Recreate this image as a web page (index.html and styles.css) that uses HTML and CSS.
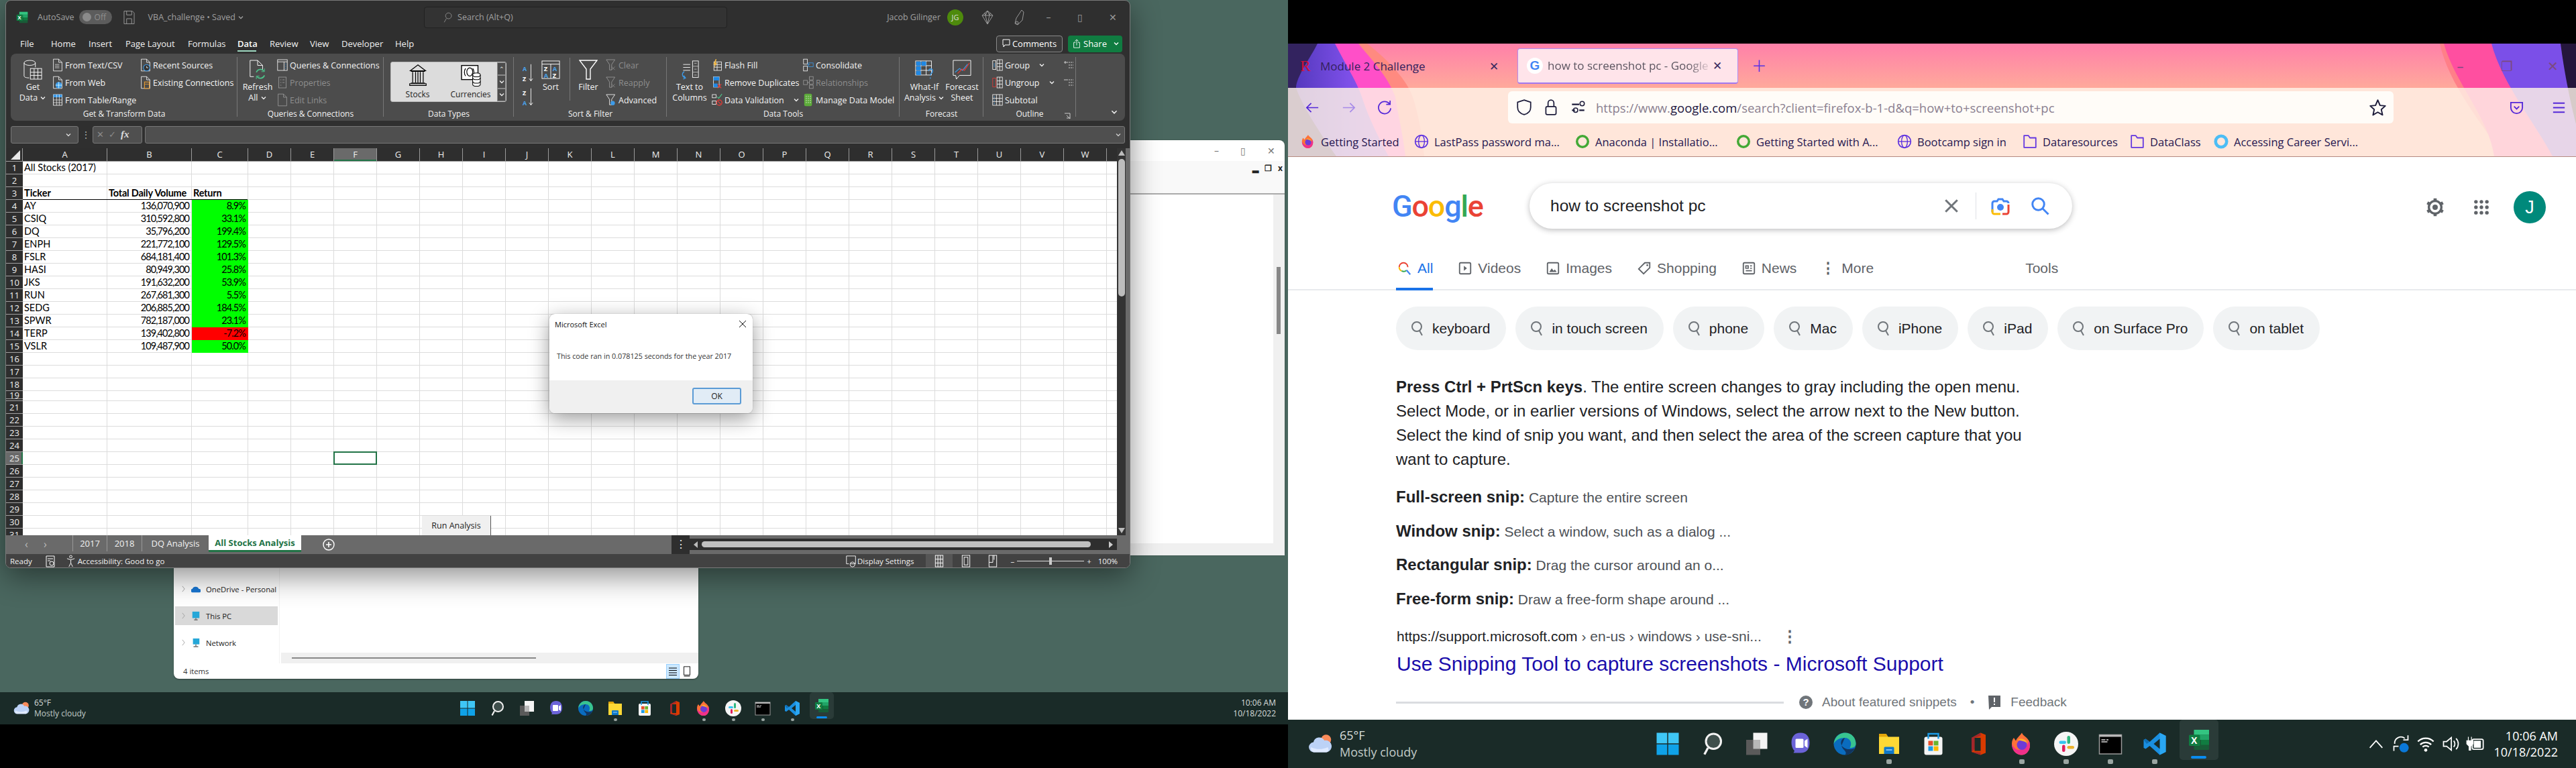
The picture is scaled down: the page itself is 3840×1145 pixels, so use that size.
FILE: index.html
```html
<!DOCTYPE html>
<html lang="en">
<head>
<meta charset="utf-8">
<title>Excel and Firefox on two monitors</title>
<link rel="stylesheet" href="styles.css">
</head>
<body>
<svg class="sprite" width="0" height="0" aria-hidden="true">
<defs>
<linearGradient id="artv" x1="0" x2="1" y1="0" y2="0"><stop offset="0" stop-color="#4f36b8"/><stop offset=".6" stop-color="#7d4fe8"/><stop offset="1" stop-color="#9a52e8"/></linearGradient>
<symbol id="chev" viewBox="0 0 10 10"><path d="M2 3.5l3 3 3-3" fill="none" stroke="currentColor" stroke-width="1.3"/></symbol>
<symbol id="doc" viewBox="0 0 20 24"><path d="M2 1h10l6 6v16H2zM12 1v6h6" fill="none" stroke="#fff"/></symbol>
<symbol id="fromtext" viewBox="0 0 20 24"><path d="M2 1h10l6 6v16H2zM12 1v6h6" fill="none" stroke="#fff"/><path d="M5 11h8M5 14h8M5 17h8" stroke="#ddd"/></symbol>
<symbol id="fromweb" viewBox="0 0 20 24"><path d="M2 1h10l6 6v16H2zM12 1v6h6" fill="none" stroke="#fff"/><circle cx="12" cy="17" r="6" fill="#3d9be9"/><path d="M6 17h12M12 11v12" stroke="#dff"/></symbol>
<symbol id="fromtable" viewBox="0 0 20 24"><rect x="2" y="2" width="16" height="20" fill="none" stroke="#fff"/><rect x="2" y="2" width="16" height="5" fill="#3d9be9"/><path d="M2 12h16M2 17h16M8 2v20M13 2v20" stroke="#fff" stroke-width=".8"/></symbol>
<symbol id="recent" viewBox="0 0 20 24"><path d="M2 1h10l6 6v16H2zM12 1v6h6" fill="none" stroke="#fff"/><circle cx="12" cy="17" r="6" fill="#333" stroke="#3d9be9" stroke-width="1.4"/><path d="M12 14v3h3" stroke="#fff" fill="none"/></symbol>
<symbol id="existing" viewBox="0 0 20 24"><path d="M2 1h10l6 6v16H2zM12 1v6h6" fill="none" stroke="#fff"/><rect x="8" y="11" width="9" height="12" fill="#4c4c4c" stroke="#f0a030" stroke-width="1.3"/><path d="M8 15h9" stroke="#f0a030"/></symbol>
<symbol id="getdata" viewBox="0 0 30 32"><path d="M1 5v21c0 2 4 3 8 3M19 5v7" fill="none" stroke="#fff"/><ellipse cx="10" cy="5" rx="9" ry="4" fill="none" stroke="#fff"/><rect x="11" y="14" width="18" height="17" fill="#4c4c4c" stroke="#fff"/><path d="M11 20h18M11 25h18M17 14v17M23 14v17" stroke="#fff"/></symbol>
<symbol id="refresh" viewBox="0 0 30 32"><path d="M3 1h12l8 8v7M15 1v8h8M3 1v26h6" fill="none" stroke="#fff"/><path d="M13 20a7 7 0 0 1 12-2M26 25a7 7 0 0 1-12 2" fill="none" stroke="#4cc38a" stroke-width="1.8"/><path d="M26 14v5h-5M13 31v-5h5" fill="none" stroke="#4cc38a"/></symbol>
<symbol id="queries" viewBox="0 0 20 24"><rect x="1" y="2" width="18" height="20" fill="none" stroke="#fff"/><path d="M1 6h18M13 6v16" stroke="#fff"/><path d="M15 10h2M15 14h2M15 18h2" stroke="#3d9be9"/></symbol>
<symbol id="props" viewBox="0 0 20 24"><rect x="3" y="2" width="14" height="20" fill="none" stroke="#fff"/><path d="M6 7h2M6 12h2M6 17h2M10 7h4M10 12h4" stroke="#fff"/></symbol>
<symbol id="bank" viewBox="0 0 30 40"><path d="M15 2L28 12H2zM1 34h28v3H1z" fill="none" stroke="#000" stroke-width="1.4"/><path d="M6 14v18M11 14v18M15 14v18M19 14v18M24 14v18M3 13h24M3 33h24" stroke="#000" stroke-width="1.4"/></symbol>
<symbol id="money" viewBox="0 0 34 40"><rect x="1" y="3" width="28" height="24" fill="#fff" stroke="#000" stroke-width="1.6"/><path d="M8 8a7 9 0 0 0 0 13M20 8a7 9 0 0 1 0 13" fill="none" stroke="#000" stroke-width="1.4"/><ellipse cx="15" cy="14" rx="5" ry="7" fill="none" stroke="#000" stroke-width="1.3"/><g fill="#fff" stroke="#000" stroke-width="1.2"><path d="M20 19a6 3 0 0 1 13 0v16a6 3 0 0 1-13 0z"/><path d="M20 19a6 3 0 0 0 13 0M20 24a6 3 0 0 0 13 0M20 30a6 3 0 0 0 13 0" fill="none"/></g></symbol>
<symbol id="az" viewBox="0 0 20 36"><text x="1" y="14" class="svgt blue">A</text><text x="1" y="30" class="svgt">Z</text><path d="M15 2v28M12 26l3 4 3-4" fill="none" stroke="#fff"/></symbol>
<symbol id="za" viewBox="0 0 20 36"><text x="1" y="14" class="svgt">Z</text><text x="1" y="30" class="svgt blue">A</text><path d="M15 2v28M12 26l3 4 3-4" fill="none" stroke="#fff"/></symbol>
<symbol id="sortb" viewBox="0 0 30 30"><rect x="1" y="1" width="28" height="28" fill="none" stroke="#fff"/><path d="M1 6h28M15 6v23" stroke="#fff"/><text x="4" y="17" class="svgt">Z</text><text x="4" y="28" class="svgt blue">A</text><text x="18" y="17" class="svgt blue">A</text><text x="18" y="28" class="svgt">Z</text></symbol>
<symbol id="funnel" viewBox="0 0 28 30"><path d="M1 1h26L17 14v15h-6V14z" fill="none" stroke="#fff" stroke-width="1.4"/></symbol>
<symbol id="fsmall" viewBox="0 0 20 24"><path d="M1 2h16L11 11v10H7V11z" fill="none" stroke="#fff"/><path d="M11 15l6 6M17 15l-6 6" stroke="#ddd"/></symbol>
<symbol id="fadv" viewBox="0 0 20 24"><path d="M1 2h16L11 11v10H7V11z" fill="none" stroke="#fff"/><circle cx="13" cy="18" r="4" fill="#3d9be9"/></symbol>
<symbol id="t2c" viewBox="0 0 32 32"><rect x="21" y="1" width="10" height="28" fill="none" stroke="#fff"/><path d="M21 10h10M21 20h10M24 5h4M24 15h4M24 25h4" stroke="#bbb"/><path d="M5 7h12M5 12h12M5 17h12" stroke="#fff"/><path d="M7 19c-5 3-4 9 2 11M6 26l3 4-4 2" fill="none" stroke="#3d9be9" stroke-width="1.5"/></symbol>
<symbol id="flash" viewBox="0 0 20 24"><rect x="4" y="6" width="14" height="16" fill="none" stroke="#fff"/><path d="M4 11h14M4 16h14M10 6v16" stroke="#fff"/><path d="M7 1L3 11h3l-2 7 6-10H7l2-7z" fill="#f4b942"/></symbol>
<symbol id="dupes" viewBox="0 0 20 26"><rect x="3" y="2" width="11" height="20" fill="none" stroke="#fff"/><rect x="3" y="2" width="11" height="7" fill="#1e88e5"/><rect x="3" y="15" width="8" height="7" fill="#1e88e5"/><path d="M11 16l7 8M18 16l-7 8" stroke="#e53935" stroke-width="1.6"/></symbol>
<symbol id="valid" viewBox="0 0 20 24"><rect x="1" y="2" width="7" height="6" fill="none" stroke="#fff"/><rect x="1" y="14" width="7" height="6" fill="none" stroke="#fff"/><path d="M10 6l3 3 6-8" fill="none" stroke="#4cc38a" stroke-width="1.4"/><circle cx="14" cy="17" r="5" fill="none" stroke="#e53935" stroke-width="1.6"/><path d="M11 14l6 6" stroke="#e53935" stroke-width="1.5"/></symbol>
<symbol id="consol" viewBox="0 0 20 24"><rect x="1" y="1" width="7" height="9" fill="none" stroke="#fff"/><rect x="1" y="14" width="7" height="9" fill="none" stroke="#fff"/><rect x="10" y="8" width="9" height="7" fill="none" stroke="#3d9be9"/><path d="M8 11h5" stroke="#3d9be9"/></symbol>
<symbol id="rel" viewBox="0 0 20 24"><rect x="1" y="8" width="7" height="8" fill="none" stroke="#fff"/><rect x="12" y="1" width="7" height="6" fill="none" stroke="#fff"/><rect x="12" y="9" width="7" height="6" fill="none" stroke="#fff"/><rect x="12" y="17" width="7" height="6" fill="none" stroke="#fff"/><path d="M8 12h4" stroke="#fff"/></symbol>
<symbol id="model" viewBox="0 0 20 26"><rect x="2" y="1" width="15" height="24" rx="3" fill="#5dab3a"/><path d="M6 5v16M10 5v16M14 5v16" stroke="#fff" stroke-dasharray="2 2"/></symbol>
<symbol id="whatif" viewBox="0 0 32 32"><rect x="1" y="1" width="27" height="24" fill="none" stroke="#fff"/><path d="M1 9h27M1 17h27M10 1v24M19 1v24" stroke="#fff"/><rect x="2" y="2" width="8" height="7" fill="#1e88e5"/><rect x="2" y="10" width="8" height="7" fill="#1e88e5"/><rect x="2" y="18" width="8" height="7" fill="#1e88e5"/><rect x="11" y="2" width="8" height="7" fill="#1e88e5"/><path d="M23 18c1-5 7-4 7 0s-4 4-4 8M26 29v2" fill="none" stroke="#3d9be9" stroke-width="1.6"/></symbol>
<symbol id="fcast" viewBox="0 0 30 32"><path d="M1 1h28v24H11l-5 6-1-6H1z" fill="none" stroke="#fff"/><path d="M4 20l7-6 5 3 8-10" fill="none" stroke="#3d9be9" stroke-width="1.3"/><path d="M8 22l7-7 4 2 8-12" fill="none" stroke="#e53935" stroke-width="1.3"/></symbol>
<symbol id="grp" viewBox="0 0 20 24"><rect x="9" y="2" width="10" height="20" fill="none" stroke="#fff"/><path d="M9 9h10M9 15h10M14 2v20" stroke="#fff"/><rect x="1" y="4" width="6" height="16" fill="none" stroke="#fff"/><path d="M4 8v8" stroke="#3d9be9"/></symbol>
<symbol id="ungrp" viewBox="0 0 20 24"><rect x="9" y="2" width="10" height="20" fill="none" stroke="#fff"/><path d="M9 9h10M9 15h10M14 2v20" stroke="#fff"/><rect x="1" y="4" width="6" height="16" fill="none" stroke="#e53935"/></symbol>
<symbol id="subt" viewBox="0 0 20 24"><rect x="1" y="2" width="18" height="20" fill="none" stroke="#fff"/><path d="M1 9h18M1 15h18M8 2v20M14 2v20" stroke="#fff"/><path d="M4 5v3M4 11v3M4 17v3" stroke="#3d9be9"/></symbol>
<symbol id="oplus" viewBox="0 0 16 16"><path d="M5 4h10M8 8h7M8 12h7" stroke="#ccc" stroke-dasharray="2 1"/><path d="M1 4h4M3 2v4" stroke="#ccc"/></symbol>
<symbol id="ominus" viewBox="0 0 16 16"><path d="M5 4h10M8 8h7M8 12h7" stroke="#ccc" stroke-dasharray="2 1"/><path d="M1 4h4" stroke="#ccc"/></symbol>
<symbol id="xl" viewBox="0 0 24 24"><rect x="7" y="2" width="15" height="20" rx="1" fill="#185c37"/><rect x="7" y="2" width="15" height="5" fill="#33c481"/><rect x="14" y="7" width="8" height="5" fill="#21a366"/><rect x="7" y="7" width="7" height="5" fill="#21a366"/><rect x="14" y="12" width="8" height="5" fill="#107c41"/><rect x="2" y="7" width="11" height="11" rx="1" fill="#107c41"/><text x="4.2" y="16" class="svgx">X</text></symbol>
<symbol id="start" viewBox="0 0 24 24"><rect x="1" y="1" width="10.5" height="10.5" fill="#3fc6f5"/><rect x="12.5" y="1" width="10.5" height="10.5" fill="#3fc6f5"/><rect x="1" y="12.5" width="10.5" height="10.5" fill="#0fa2e8"/><rect x="12.5" y="12.5" width="10.5" height="10.5" fill="#0fa2e8"/></symbol>
<symbol id="tsearch" viewBox="0 0 24 24"><circle cx="13.5" cy="9.5" r="7.5" fill="#3f4f4c" stroke="#f2f2f2" stroke-width="2"/><path d="M8 16l-3.5 6.5" stroke="#f2f2f2" stroke-width="2.2"/></symbol>
<symbol id="tview" viewBox="0 0 24 24"><rect x="9" y="1" width="14" height="16" fill="#f5f5f5"/><rect x="2" y="8" width="14" height="15" fill="#5a5a5a"/><rect x="9" y="8" width="7" height="9" fill="#b8b8b8"/></symbol>
<symbol id="chat" viewBox="0 0 24 24"><path d="M12 1c6 0 9 4 9 10s-3 10-9 10H5l1-2C4 17 3 14 3 11 3 5 6 1 12 1z" fill="#6b63d8"/><rect x="7" y="7" width="8" height="9" rx="1" fill="#fff"/><path d="M16 9l3-2v9l-3-2z" fill="#fff"/></symbol>
<symbol id="edge" viewBox="0 0 24 24"><circle cx="12" cy="12" r="11" fill="#0a6cbf"/><path d="M1 12C2 4 8 1 12 1c7 0 11 5 11 11 0 3-3 4-6 4 3-5 0-10-5-10C7 6 3 8 1 12z" fill="#38c48f"/><path d="M12 6C8 7 7 12 10 15s9 3 12 1c-2 5-6 7-10 7 4-3-4-6-3-10z" fill="#12355f"/></symbol>
<symbol id="folder" viewBox="0 0 24 24"><path d="M2 2h7l2 3h11v17H2z" fill="#fdd835"/><path d="M2 2h7l2 3H2z" fill="#e2a50a"/><path d="M8 15h8a1 1 0 0 1 1 1v6H7v-6a1 1 0 0 1 1-1z" fill="#0f78c9"/><path d="M9 18h6" stroke="#9fd4ff"/></symbol>
<symbol id="store" viewBox="0 0 24 24"><rect x="3" y="5" width="18" height="18" rx="2" fill="#f4f4f4"/><path d="M7 7V2h10v5" fill="none" stroke="#1c9be6" stroke-width="1.6"/><rect x="7" y="9" width="4.6" height="4.6" fill="#e8502a"/><rect x="12.4" y="9" width="4.6" height="4.6" fill="#6ab42e"/><rect x="7" y="14.4" width="4.6" height="4.6" fill="#1c9be6"/><rect x="12.4" y="14.4" width="4.6" height="4.6" fill="#fbb900"/></symbol>
<symbol id="office" viewBox="0 0 24 24"><path d="M15 1l5 2v18l-5 2-9-3V6z" fill="#d83b01"/><path d="M15 1v22l-9-3 9 .5V4L9 6v11l-3 3V6z" fill="#a4262c"/><rect x="9" y="6" width="6" height="13" fill="#1a2b28"/></symbol>
<symbol id="ffox" viewBox="0 0 24 24"><path d="M12 1c1 3 5 4 7 8 3 6-1 14-7 14S2 18 2 12c0-3 1-5 2-6l2 3c1-3 4-5 6-8z" fill="#ff7139"/><path d="M19 9c3 6-1 14-7 14S2 18 2 12c3 8 13 9 17-3z" fill="#f0308a"/><circle cx="12" cy="13" r="5" fill="#6d3bd6"/><path d="M8 8c3-2 8-1 9 3-3-2-6-2-9-3z" fill="#ffb02e"/></symbol>
<symbol id="slack" viewBox="0 0 24 24"><circle cx="12" cy="12" r="12" fill="#f5f5f5"/><rect x="13" y="4" width="3" height="8" rx="1.5" fill="#2eb67d"/><rect x="5" y="9" width="7" height="3" rx="1.5" fill="#36c5f0"/><rect x="8" y="13" width="3" height="7" rx="1.5" fill="#e01e5a"/><rect x="13" y="14" width="7" height="3" rx="1.5" fill="#ecb22e"/></symbol>
<symbol id="term" viewBox="0 0 24 24"><rect x="1" y="3" width="22" height="19" fill="#000" stroke="#9a9a9a"/><rect x="1" y="3" width="22" height="2" fill="#bbb"/><path d="M3 8h4M8 8h2M3 10h6" stroke="#ddd"/></symbol>
<symbol id="code" viewBox="0 0 24 24"><path d="M17 1l6 3v16l-6 3L7 14l-4 3-2-1V8l2-1 4 3z" fill="#1a8fe0"/><path d="M1 8l2-1 4 3-3 2z" fill="#0f6eb5"/><path d="M17 1l6 3v16l-6 3z" fill="#2aa6f2"/><path d="M17 7v10l-6-5z" fill="#1a2b28"/></symbol>
<symbol id="cloud" viewBox="0 0 28 24"><circle cx="21" cy="7" r="6" fill="#f98b5a"/><path d="M7 22a6 6 0 0 1-1-12 7 7 0 0 1 13-2 6 6 0 0 1 3 14z" fill="#bcd2f6"/><path d="M6 22a5 5 0 0 1-3-6c6 3 14 3 20 0 2 3 1 6-2 6z" fill="#dfeaff"/></symbol>
<symbol id="qsmall" viewBox="0 0 20 24"><circle cx="9" cy="9" r="7" fill="none" stroke="currentColor" stroke-width="2"/><path d="M13 15l4 7" stroke="currentColor" stroke-width="2"/></symbol>
<symbol id="globe" viewBox="0 0 20 20"><circle cx="10" cy="10" r="8.5" fill="none" stroke="#5a2ee0" stroke-width="1.5"/><ellipse cx="10" cy="10" rx="4" ry="8.5" fill="none" stroke="#5a2ee0" stroke-width="1.2"/><path d="M2 10h16" stroke="#5a2ee0" stroke-width="1.2"/></symbol>
<symbol id="ring" viewBox="0 0 20 20"><circle cx="10" cy="10" r="7.5" fill="none" stroke="#43a936" stroke-width="3.2"/></symbol>
<symbol id="ringb" viewBox="0 0 20 20"><circle cx="10" cy="10" r="7.5" fill="none" stroke="#4cbdf5" stroke-width="4.2"/></symbol>
<symbol id="bfolder" viewBox="0 0 20 20"><path d="M2 2h6l2 3h8v13H2z" fill="none" stroke="#6236e0" stroke-width="1.6" stroke-linejoin="round"/></symbol>
</defs>
</svg>

<div class="screens">
<section class="monitor left">
  <div class="desk">
    <div class="win back">
      <div class="back-title"><span class="wc">–</span><span class="wc">▯</span><span class="wc">✕</span></div>
      <div class="back-sub"><b>▂</b><b>❐</b><b>x</b></div>
      <div class="back-body"><div class="back-pane"></div><div class="back-scroll"><i></i></div></div>
      <div class="back-foot"></div>
    </div>

    <div class="win fe">
      <div class="fe-main">
        <nav class="fe-nav">
          <div class="fe-item"><svg class="ar" viewBox="0 0 8 12"><path d="M2 1l4 5-4 5" fill="none" stroke="#999"/></svg><svg class="ic14" viewBox="0 0 16 16"><path d="M3 14a3 3 0 0 1-1-6 6 6 0 0 1 11 0 3 3 0 0 1 1 6z" fill="#1976d2"/></svg>OneDrive - Personal</div>
          <div class="fe-item sel"><svg class="ar" viewBox="0 0 8 12"><path d="M2 1l4 5-4 5" fill="none" stroke="#999"/></svg><svg class="ic14" viewBox="0 0 16 16"><rect x="2" y="1" width="12" height="11" fill="#25a7d8"/><path d="M8 12v2M5 15h6" stroke="#555" stroke-width="1.4"/></svg>This PC</div>
          <div class="fe-item"><svg class="ar" viewBox="0 0 8 12"><path d="M2 1l4 5-4 5" fill="none" stroke="#999"/></svg><svg class="ic14" viewBox="0 0 16 16"><rect x="3" y="1" width="11" height="10" fill="#25a7d8"/><path d="M8 11v3M4 15h8" stroke="#555" stroke-width="1.4"/></svg>Network</div>
        </nav>
        <div class="fe-pane"><div class="fe-hs"><i></i></div></div>
      </div>
      <div class="fe-status"><span>4 items</span><span class="fe-views"><b class="on"><svg viewBox="0 0 12 14"><path d="M0 2h12M0 5.500h12M0 9h12M0 12.500h12" stroke="#000"/></svg></b><b><svg viewBox="0 0 12 18"><rect x="1" y="1" width="10" height="14" fill="none" stroke="#000"/><path d="M1 17h10" stroke="#000"/></svg></b></span></div>
    </div>

    <div class="win xl">
      <header class="xl-title">
        <svg class="xl-logo"><use href="#xl"/></svg>
        <span class="dim t-auto">AutoSave</span>
        <span class="toggle"><i></i>Off</span>
        <svg class="xl-save" viewBox="0 0 18 22"><path d="M1 1h13l3 3v17H1zM5 1v6h8V1M5 21v-8h8v8" fill="none" stroke="#9a9a9a"/></svg>
        <span class="dim t-file">VBA_challenge • Saved <svg class="ch"><use href="#chev"/></svg></span>
        <div class="xl-search"><svg class="ic14" viewBox="0 0 16 20"><circle cx="10" cy="7" r="5.5" fill="none" stroke="#9a9a9a"/><path d="M6 12l-4 7" stroke="#9a9a9a"/></svg><span>Search (Alt+Q)</span></div>
        <span class="dim t-user">Jacob Gilinger</span>
        <span class="avatar">JG</span>
        <svg class="xl-gem" viewBox="0 0 18 22"><path d="M9 1l8 7-8 13L1 8zM1 8h16M6 8l3 13 3-13M5 4l1 4 3-7 3 7 1-4" fill="none" stroke="#999"/></svg>
        <svg class="xl-pen" viewBox="0 0 18 26"><path d="M13 2l3 3-2 12-7 7-4-2 2-8z" fill="none" stroke="#999"/><circle cx="6" cy="21" r="2" fill="none" stroke="#999"/></svg>
        <div class="xl-ctrl"><span>–</span><span>▯</span><span>✕</span></div>
      </header>
      <div class="xl-tabs">
        <span class="tab t1">File</span><span class="tab t2">Home</span><span class="tab t3">Insert</span><span class="tab t4">Page Layout</span><span class="tab t5">Formulas</span><span class="tab t6 active">Data</span><span class="tab t7">Review</span><span class="tab t8">View</span><span class="tab t9">Developer</span><span class="tab t10">Help</span>
        <span class="btn-comments"><svg class="ic12" viewBox="0 0 12 14"><path d="M1 1h10v8H4l-2 3V9H1z" fill="none" stroke="#fff"/></svg>Comments</span>
        <span class="btn-share"><svg class="ic12" viewBox="0 0 12 16"><path d="M1 6h3M8 6h3v9H1V6M6 11V2M3 4l3-3 3 3" fill="none" stroke="#fff"/></svg>Share<svg class="ch chs"><use href="#chev"/></svg></span>
      </div>

      <div class="ribbon">
        <div class="rg g1">
          <div class="rb">
            <div class="big b-get"><svg class="bi"><use href="#getdata"/></svg><span>Get</span><span>Data <svg class="ch"><use href="#chev"/></svg></span></div>
            <div class="col c-get1"><div class="ri"><svg><use href="#fromtext"/></svg>From Text/CSV</div><div class="ri"><svg><use href="#fromweb"/></svg>From Web</div><div class="ri"><svg><use href="#fromtable"/></svg>From Table/Range</div></div>
            <div class="col"><div class="ri"><svg><use href="#recent"/></svg>Recent Sources</div><div class="ri"><svg><use href="#existing"/></svg>Existing Connections</div></div>
          </div>
          <div class="rl">Get &amp; Transform Data</div>
        </div>
        <div class="rg g2">
          <div class="rb">
            <div class="big b-ref"><svg class="bi"><use href="#refresh"/></svg><span>Refresh</span><span>All <svg class="ch"><use href="#chev"/></svg></span></div>
            <div class="col c-q"><div class="ri"><svg><use href="#queries"/></svg>Queries &amp; Connections</div><div class="ri off"><svg><use href="#props"/></svg>Properties</div><div class="ri off"><svg><use href="#doc"/></svg>Edit Links</div></div>
          </div>
          <div class="rl">Queries &amp; Connections</div>
        </div>
        <div class="rg g3">
          <div class="rb">
            <div class="gallery">
              <div class="gal-i"><svg class="gi"><use href="#bank"/></svg>Stocks</div>
              <div class="gal-i"><svg class="gi gi2"><use href="#money"/></svg>Currencies</div>
              <div class="gal-s"><b>⌃</b><b class="d"><svg class="ch"><use href="#chev"/></svg></b><b class="d"><svg class="ch"><use href="#chev"/></svg></b></div>
            </div>
          </div>
          <div class="rl">Data Types</div>
        </div>
        <div class="rg g4">
          <div class="rb">
            <div class="azs"><svg><use href="#az"/></svg><svg><use href="#za"/></svg></div>
            <div class="big b-sort"><svg class="bi"><use href="#sortb"/></svg><span>Sort</span></div>
            <div class="big b-filter"><svg class="bi"><use href="#funnel"/></svg><span>Filter</span></div>
            <div class="col c-f"><div class="ri off"><svg><use href="#fsmall"/></svg>Clear</div><div class="ri off"><svg><use href="#fsmall"/></svg>Reapply</div><div class="ri"><svg><use href="#fadv"/></svg>Advanced</div></div>
          </div>
          <div class="rl">Sort &amp; Filter</div>
        </div>
        <div class="rg g5">
          <div class="rb">
            <div class="big b-t2c"><svg class="bi"><use href="#t2c"/></svg><span>Text to</span><span>Columns</span></div>
            <div class="col c-d1"><div class="ri"><svg><use href="#flash"/></svg>Flash Fill</div><div class="ri"><svg><use href="#dupes"/></svg>Remove Duplicates</div><div class="ri"><svg><use href="#valid"/></svg>Data Validation <svg class="ch chg"><use href="#chev"/></svg></div></div>
            <div class="col"><div class="ri"><svg><use href="#consol"/></svg>Consolidate</div><div class="ri off"><svg><use href="#rel"/></svg>Relationships</div><div class="ri"><svg><use href="#model"/></svg>Manage Data Model</div></div>
          </div>
          <div class="rl">Data Tools</div>
        </div>
        <div class="rg g6">
          <div class="rb">
            <div class="big b-wi"><svg class="bi"><use href="#whatif"/></svg><span>What-If</span><span>Analysis <svg class="ch"><use href="#chev"/></svg></span></div>
            <div class="big b-fc"><svg class="bi"><use href="#fcast"/></svg><span>Forecast</span><span>Sheet</span></div>
          </div>
          <div class="rl">Forecast</div>
        </div>
        <div class="rg g7">
          <div class="rb">
            <div class="col c-o"><div class="ri"><svg><use href="#grp"/></svg>Group <svg class="ch chg"><use href="#chev"/></svg></div><div class="ri"><svg><use href="#ungrp"/></svg>Ungroup <svg class="ch chg"><use href="#chev"/></svg></div><div class="ri"><svg><use href="#subt"/></svg>Subtotal</div></div>
            <div class="col c-pm"><div class="ri"><svg class="ic16"><use href="#oplus"/></svg></div><div class="ri"><svg class="ic16"><use href="#ominus"/></svg></div></div>
          </div>
          <div class="rl">Outline <svg class="launch" viewBox="0 0 10 10"><path d="M1 1h8v8M9 9L4 4M4 8h5" fill="none" stroke="#ccc"/></svg></div>
        </div>
        <svg class="ch collapse"><use href="#chev"/></svg>
      </div>

      <div class="fbar">
        <div class="fb-name"><svg class="ch"><use href="#chev"/></svg></div>
        <span class="fb-dots">⋮</span>
        <div class="fb-fx"><span>✕</span><span>✓</span><em>fx</em></div>
        <div class="fb-in"><svg class="ch"><use href="#chev"/></svg></div>
      </div>

      <div class="sheetwrap">
        <div class="sheet">
          <div class="hd">
            <div class="corner"></div><div class="ch-a">A</div><div class="ch-b">B</div><div class="ch-c">C</div><div class="ch-n">D</div><div class="ch-n">E</div><div class="ch-n cur">F</div><div class="ch-n">G</div><div class="ch-n">H</div><div class="ch-n">I</div><div class="ch-n">J</div><div class="ch-n">K</div><div class="ch-n">L</div><div class="ch-n">M</div><div class="ch-n">N</div><div class="ch-n">O</div><div class="ch-n">P</div><div class="ch-n">Q</div><div class="ch-n">R</div><div class="ch-n">S</div><div class="ch-n">T</div><div class="ch-n">U</div><div class="ch-n">V</div><div class="ch-n">W</div><div class="ch-x"></div>
          </div>
          <div class="rw"><div class="rh">1</div><div class="ca">All Stocks (2017)</div><div class="cb"></div><div class="cc"></div><div class="cr"></div></div>
          <div class="rw"><div class="rh">2</div><div class="ca"></div><div class="cb"></div><div class="cc"></div><div class="cr"></div></div>
          <div class="rw hdrow"><div class="rh">3</div><div class="ca">Ticker</div><div class="cb hl">Total Daily Volume</div><div class="cc hl">Return</div><div class="cr"></div></div>
          <div class="rw"><div class="rh">4</div><div class="ca">AY</div><div class="cb">136,070,900</div><div class="cc gr">8.9%</div><div class="cr"></div></div>
          <div class="rw"><div class="rh">5</div><div class="ca">CSIQ</div><div class="cb">310,592,800</div><div class="cc gr">33.1%</div><div class="cr"></div></div>
          <div class="rw"><div class="rh">6</div><div class="ca">DQ</div><div class="cb">35,796,200</div><div class="cc gr">199.4%</div><div class="cr"></div></div>
          <div class="rw"><div class="rh">7</div><div class="ca">ENPH</div><div class="cb">221,772,100</div><div class="cc gr">129.5%</div><div class="cr"></div></div>
          <div class="rw"><div class="rh">8</div><div class="ca">FSLR</div><div class="cb">684,181,400</div><div class="cc gr">101.3%</div><div class="cr"></div></div>
          <div class="rw"><div class="rh">9</div><div class="ca">HASI</div><div class="cb">80,949,300</div><div class="cc gr">25.8%</div><div class="cr"></div></div>
          <div class="rw"><div class="rh">10</div><div class="ca">JKS</div><div class="cb">191,632,200</div><div class="cc gr">53.9%</div><div class="cr"></div></div>
          <div class="rw"><div class="rh">11</div><div class="ca">RUN</div><div class="cb">267,681,300</div><div class="cc gr">5.5%</div><div class="cr"></div></div>
          <div class="rw"><div class="rh">12</div><div class="ca">SEDG</div><div class="cb">206,885,200</div><div class="cc gr">184.5%</div><div class="cr"></div></div>
          <div class="rw"><div class="rh">13</div><div class="ca">SPWR</div><div class="cb">782,187,000</div><div class="cc gr">23.1%</div><div class="cr"></div></div>
          <div class="rw"><div class="rh">14</div><div class="ca">TERP</div><div class="cb">139,402,800</div><div class="cc rd">-7.2%</div><div class="cr"></div></div>
          <div class="rw"><div class="rh">15</div><div class="ca">VSLR</div><div class="cb">109,487,900</div><div class="cc gr">50.0%</div><div class="cr"></div></div>
          <div class="rw"><div class="rh">16</div><div class="ca"></div><div class="cb"></div><div class="cc"></div><div class="cr"></div></div>
          <div class="rw"><div class="rh">17</div><div class="ca"></div><div class="cb"></div><div class="cc"></div><div class="cr"></div></div>
          <div class="rw"><div class="rh">18</div><div class="ca"></div><div class="cb"></div><div class="cc"></div><div class="cr"></div></div>
          <div class="rw short"><div class="rh">19</div><div class="ca"></div><div class="cb"></div><div class="cc"></div><div class="cr"></div></div>
          <div class="rw"><div class="rh">21</div><div class="ca"></div><div class="cb"></div><div class="cc"></div><div class="cr"></div></div>
          <div class="rw"><div class="rh">22</div><div class="ca"></div><div class="cb"></div><div class="cc"></div><div class="cr"></div></div>
          <div class="rw"><div class="rh">23</div><div class="ca"></div><div class="cb"></div><div class="cc"></div><div class="cr"></div></div>
          <div class="rw"><div class="rh">24</div><div class="ca"></div><div class="cb"></div><div class="cc"></div><div class="cr"></div></div>
          <div class="rw"><div class="rh cur">25</div><div class="ca"></div><div class="cb"></div><div class="cc"></div><div class="cr"></div></div>
          <div class="rw"><div class="rh">26</div><div class="ca"></div><div class="cb"></div><div class="cc"></div><div class="cr"></div></div>
          <div class="rw"><div class="rh">27</div><div class="ca"></div><div class="cb"></div><div class="cc"></div><div class="cr"></div></div>
          <div class="rw"><div class="rh">28</div><div class="ca"></div><div class="cb"></div><div class="cc"></div><div class="cr"></div></div>
          <div class="rw"><div class="rh">29</div><div class="ca"></div><div class="cb"></div><div class="cc"></div><div class="cr"></div></div>
          <div class="rw"><div class="rh">30</div><div class="ca"></div><div class="cb"></div><div class="cc"></div><div class="cr"></div></div>
          <div class="rw"><div class="rh">31</div><div class="ca"></div><div class="cb"></div><div class="cc"></div><div class="cr"></div></div>
          <div class="selcell"></div>
          <div class="runbtn">Run Analysis</div>
        </div>
        <div class="vscroll"><b class="up"></b><i></i><b class="dn"></b></div>
      </div>

      <div class="sheettabs">
        <span class="nav">‹</span><span class="nav n2">›</span>
        <span class="st s1">2017</span><span class="st s2">2018</span><span class="st s3">DQ Analysis</span>
        <span class="st cur">All Stocks Analysis</span>
        <svg class="addsheet" viewBox="0 0 18 18"><circle cx="9" cy="9" r="8" fill="none" stroke="#fff" stroke-width="1.4"/><path d="M5 9h8M9 5v8" stroke="#fff" stroke-width="1.6"/></svg>
        <span class="more">⋮</span>
        <div class="hscroll"><b class="la"></b><i></i><b class="ra"></b></div>
      </div>
      <footer class="status">
        <span class="s-ready">Ready</span>
        <svg class="s-macro" viewBox="0 0 14 18"><path d="M1 1h12v16H1zM3 5h8M3 8h4" fill="none" stroke="#fff"/><circle cx="9" cy="12" r="3" fill="none" stroke="#fff"/></svg>
        <svg class="s-acc" viewBox="0 0 16 20"><circle cx="7" cy="3" r="2" fill="none" stroke="#fff"/><path d="M1 6l6 2 6-2M7 8v5l-3 6M7 13l3 6" fill="none" stroke="#fff"/></svg>
        <span>Accessibility: Good to go</span>
        <svg class="s-disp" viewBox="0 0 18 20"><path d="M1 1h15v13H8M1 1v13h4" fill="none" stroke="#fff"/><circle cx="11" cy="15" r="4" fill="none" stroke="#fff"/></svg>
        <span class="s-dt">Display Settings</span>
        <span class="vw on"><svg viewBox="0 0 14 20"><rect x="1" y="1" width="12" height="18" fill="none" stroke="#fff"/><path d="M1 7h12M1 13h12M5 1v18M9 1v18" stroke="#fff"/></svg></span>
        <span class="vw"><svg viewBox="0 0 14 20"><rect x="1" y="1" width="12" height="18" fill="none" stroke="#fff"/><rect x="4" y="4" width="6" height="12" fill="none" stroke="#fff"/></svg></span>
        <span class="vw"><svg viewBox="0 0 14 20"><rect x="1" y="1" width="12" height="18" fill="none" stroke="#fff"/><path d="M1 12h6V1M9 1v7" stroke="#fff" fill="none"/></svg></span>
        <div class="zoom"><span>–</span><div class="slider"><i></i></div><span>+</span></div>
        <span class="pct">100%</span>
      </footer>
    </div>

    <div class="win dialog">
      <div class="dlg-t"><span>Microsoft Excel</span><svg class="ic12" viewBox="0 0 12 12"><path d="M1 1l10 10M11 1L1 11" stroke="#111" stroke-width="1"/></svg></div>
      <div class="dlg-b">This code ran in 0.078125 seconds for the year 2017</div>
      <div class="dlg-f"><span class="okbtn">OK</span></div>
    </div>
  </div>
  <div class="taskbar small">
    <div class="weather"><svg class="wicon"><use href="#cloud"/></svg><div><div>65°F</div><div class="wsub">Mostly cloudy</div></div></div>
    <div class="apps">
      <span class="app"><svg><use href="#start"/></svg></span><span class="app"><svg><use href="#tsearch"/></svg></span><span class="app"><svg><use href="#tview"/></svg></span><span class="app"><svg><use href="#chat"/></svg></span><span class="app"><svg><use href="#edge"/></svg></span><span class="app dot"><svg><use href="#folder"/></svg></span><span class="app"><svg><use href="#store"/></svg></span><span class="app"><svg><use href="#office"/></svg></span><span class="app dot"><svg><use href="#ffox"/></svg></span><span class="app dot"><svg><use href="#slack"/></svg></span><span class="app dot"><svg><use href="#term"/></svg></span><span class="app dot"><svg><use href="#code"/></svg></span><span class="app act"><svg><use href="#xl"/></svg></span>
    </div>
    <div class="clock"><div>10:06 AM</div><div>10/18/2022</div></div>
  </div>
</section>

<section class="monitor right">
  <div class="chrome">
    <svg class="art artl" viewBox="0 0 240 168" aria-hidden="true"><path d="M0 0H118C150 25 178 55 186 80 196 110 200 140 203 168H0z" fill="#ff8a80"/><path d="M0 0H105C125 25 150 50 160 80 165 110 172 140 175 168H0z" fill="#ff4fc8"/><path d="M0 0H70C85 30 105 60 112 85 120 110 135 140 150 168H0z" fill="url(#artv)"/><path d="M0 0H44C34 20 12 50 12 66 20 90 45 130 72 168H0z" fill="#33235f"/></svg>
    <svg class="art artr" viewBox="0 0 240 168" aria-hidden="true"><path d="M37 0H240V168H132C100 120 50 60 37 0z" fill="#ff7f88"/><path d="M43 0H240V168H118C110 110 60 60 43 0z" fill="#ff4fa0"/><path d="M114 0H240V168H205C180 120 130 60 114 0z" fill="#7b4fe8"/><path d="M217 0H240V120C232 90 222 40 217 0z" fill="#25163c"/></svg>
    <div class="ff-tabs">
      <div class="ftab"><span class="r-logo">R</span><span class="ft-t">Module 2 Challenge</span><span class="ft-x">✕</span></div>
      <div class="ftab on"><span class="g-fav">G</span><span class="ft-t">how to screenshot pc - Google Search</span><span class="ft-x">✕</span></div>
      <span class="ft-plus">+</span>
      <div class="ff-ctl"><span class="c1">–</span><span class="c2">❐</span><span class="c3">✕</span></div>
    </div>
    <div class="ff-bars">
      <div class="ff-nav">
        <svg class="nv n-back" viewBox="0 0 24 24"><path d="M21 12H3M10 5l-7 7 7 7" fill="none" stroke="#5327d8" stroke-width="1.8"/></svg>
        <svg class="nv n-fwd" viewBox="0 0 24 24"><path d="M3 12h18M14 5l7 7-7 7" fill="none" stroke="#a68be8" stroke-width="1.8"/></svg>
        <svg class="nv n-rel" viewBox="0 0 24 24"><path d="M19 6a9.500 9.500 0 1 0 2 7M20 1v6h-6" fill="none" stroke="#5327d8" stroke-width="1.8"/></svg>
        <div class="urlbar">
          <svg class="uic" viewBox="0 0 22 24"><path d="M11 2l9 3v7c0 6-5 9-9 10-4-1-9-4-9-10V5z" fill="none" stroke="#1c1b3a" stroke-width="1.6"/></svg>
          <svg class="uic" viewBox="0 0 22 24"><path d="M7 11V6a4 4 0 0 1 8 0v5" fill="none" stroke="#1c1b3a" stroke-width="1.6"/><rect x="4" y="11" width="14" height="11" rx="2" fill="none" stroke="#1c1b3a" stroke-width="1.6"/></svg>
          <svg class="uic" viewBox="0 0 22 24"><path d="M3 8h10M3 16h4M13 16h7" stroke="#1c1b3a" stroke-width="2"/><circle cx="17" cy="7" r="3" fill="none" stroke="#1c1b3a" stroke-width="1.4"/><circle cx="8" cy="16" r="3" fill="none" stroke="#1c1b3a" stroke-width="1.4"/></svg>
          <span class="urlt">https://www.<b>google.com</b>/search?client=firefox-b-1-d&amp;q=how+to+screenshot+pc</span>
          <svg class="ustar" viewBox="0 0 24 24"><path d="M12 2l3 7 7 .7-5.300 4.800 1.600 7.200L12 18l-6.300 3.700 1.600-7.200L2 9.700 9 9z" fill="none" stroke="#1c1b3a" stroke-width="1.7" stroke-linejoin="round"/></svg>
        </div>
        <svg class="nv n-pock" viewBox="0 0 24 24"><path d="M3 4h18v8c0 5-4 9-9 9s-9-4-9-9z" fill="none" stroke="#5327d8" stroke-width="1.9"/><path d="M8 10l4 4 4-4" fill="none" stroke="#5327d8" stroke-width="1.9"/></svg>
        <svg class="nv n-menu" viewBox="0 0 24 24"><path d="M3 5h18M3 12h18M3 19h18" stroke="#5327d8" stroke-width="2"/></svg>
      </div>
      <div class="ff-book">
        <span class="bm b1"><svg><use href="#ffox"/></svg>Getting Started</span>
        <span class="bm b2"><svg><use href="#globe"/></svg>LastPass password ma...</span>
        <span class="bm b3"><svg><use href="#ring"/></svg>Anaconda | Installatio...</span>
        <span class="bm b4"><svg><use href="#ring"/></svg>Getting Started with A...</span>
        <span class="bm b5"><svg><use href="#globe"/></svg>Bootcamp sign in</span>
        <span class="bm b6"><svg><use href="#bfolder"/></svg>Dataresources</span>
        <span class="bm b7"><svg><use href="#bfolder"/></svg>DataClass</span>
        <span class="bm b8"><svg><use href="#ringb"/></svg>Accessing Career Servi...</span>
      </div>
    </div>
  </div>

  <main class="gpage">
    <div class="g-head">
      <div class="g-logo"><span class="lb">G</span><span class="lr">o</span><span class="ly">o</span><span class="lb">g</span><span class="lg">l</span><span class="lr">e</span></div>
      <div class="g-box">
        <span class="g-q">how to screenshot pc</span>
        <svg class="g-x" viewBox="0 0 24 24"><path d="M5 5l14 14M19 5L5 19" stroke="#70757a" stroke-width="2.400"/></svg>
        <i class="g-div"></i>
        <svg class="g-lens" viewBox="0 0 30 30"><path d="M3 24V11a3 3 0 0 1 3-3h4l2-3h6l2 3h4a3 3 0 0 1 3 3" fill="none" stroke="#4285f4" stroke-width="3"/><path d="M27 13v11a3 3 0 0 1-3 3h-6" fill="none" stroke="#ea4335" stroke-width="3"/><path d="M3 20v4a3 3 0 0 0 3 3h9" fill="none" stroke="#fbbc04" stroke-width="3"/><circle cx="15" cy="17" r="5" fill="#4285f4"/></svg>
        <svg class="g-mag" viewBox="0 0 24 24"><circle cx="10" cy="10" r="7" fill="none" stroke="#4285f4" stroke-width="2.400"/><path d="M15 15l7 7" stroke="#4285f4" stroke-width="2.400"/></svg>
      </div>
      <div class="g-right">
        <svg class="g-gear" viewBox="0 0 24 24"><circle cx="12" cy="12" r="3" fill="#5f6368"/><circle cx="12" cy="12" r="7" fill="none" stroke="#5f6368" stroke-width="2.500"/><path d="M12 2v4M12 18v4M3.300 7l3.500 2M17.200 15l3.500 2M3.300 17l3.500-2M17.200 9l3.500-2" stroke="#5f6368" stroke-width="3.500"/></svg>
        <svg class="g-apps" viewBox="0 0 24 24" fill="#5f6368"><circle cx="5" cy="5" r="2.300"/><circle cx="12" cy="5" r="2.300"/><circle cx="19" cy="5" r="2.300"/><circle cx="5" cy="12" r="2.300"/><circle cx="12" cy="12" r="2.300"/><circle cx="19" cy="12" r="2.300"/><circle cx="5" cy="19" r="2.300"/><circle cx="12" cy="19" r="2.300"/><circle cx="19" cy="19" r="2.300"/></svg>
        <span class="g-av">J</span>
      </div>
    </div>
    <div class="g-tabs">
      <span class="gt g-all"><svg viewBox="0 0 24 24"><path d="M3 10a7 7 0 0 1 14 0" fill="none" stroke="#ea4335" stroke-width="2.200"/><path d="M3 10a7 7 0 0 0 4 6.300" fill="none" stroke="#fbbc04" stroke-width="2.200"/><path d="M7 16.300a7 7 0 0 0 8-1" fill="none" stroke="#34a853" stroke-width="2.200"/><path d="M15 15l6 7" stroke="#4285f4" stroke-width="2.400"/></svg>All</span>
      <span class="gt"><svg viewBox="0 0 24 24"><rect x="3" y="3" width="18" height="18" rx="2" fill="none" stroke="#5f6368" stroke-width="2"/><path d="M10 8l5 4-5 4z" fill="#5f6368"/></svg>Videos</span>
      <span class="gt"><svg viewBox="0 0 24 24"><rect x="3" y="3" width="18" height="18" rx="2" fill="none" stroke="#5f6368" stroke-width="2"/><path d="M6 18l4-6 3 4 2-2 3 4z" fill="#5f6368"/></svg>Images</span>
      <span class="gt"><svg viewBox="0 0 24 24"><path d="M13 3h8v8L11 21l-8-8z" fill="none" stroke="#5f6368" stroke-width="2"/><circle cx="17" cy="7" r="1.500" fill="#5f6368"/></svg>Shopping</span>
      <span class="gt"><svg viewBox="0 0 24 24"><rect x="3" y="3" width="18" height="18" rx="2" fill="none" stroke="#5f6368" stroke-width="2"/><path d="M7 8h4v4H7zM14 8h3M14 12h3M7 16h10" stroke="#5f6368" stroke-width="1.800" fill="none"/></svg>News</span>
      <span class="gt g-more"><b>⋮</b>More</span>
      <span class="gt g-tools">Tools</span>
    </div>
    <div class="g-chips">
      <span class="chip"><svg><use href="#qsmall"/></svg>keyboard</span>
      <span class="chip"><svg><use href="#qsmall"/></svg>in touch screen</span>
      <span class="chip"><svg><use href="#qsmall"/></svg>phone</span>
      <span class="chip"><svg><use href="#qsmall"/></svg>Mac</span>
      <span class="chip"><svg><use href="#qsmall"/></svg>iPhone</span>
      <span class="chip"><svg><use href="#qsmall"/></svg>iPad</span>
      <span class="chip"><svg><use href="#qsmall"/></svg>on Surface Pro</span>
      <span class="chip"><svg><use href="#qsmall"/></svg>on tablet</span>
    </div>
    <p class="g-para"><b>Press Ctrl + PrtScn keys</b>. The entire screen changes to gray including the open menu.<br>Select Mode, or in earlier versions of Windows, select the arrow next to the New button.<br>Select the kind of snip you want, and then select the area of the screen capture that you<br>want to capture.</p>
    <ul class="g-list">
      <li><b>Full-screen snip:</b> Capture the entire screen</li>
      <li><b>Window snip:</b> Select a window, such as a dialog ...</li>
      <li><b>Rectangular snip:</b> Drag the cursor around an o...</li>
      <li><b>Free-form snip:</b> Draw a free-form shape around ...</li>
    </ul>
    <div class="g-url"><span><em>https://support.microsoft.com</em> › en-us › windows › use-sni...</span><b>⋮</b></div>
    <a class="g-title">Use Snipping Tool to capture screenshots - Microsoft Support</a>
    <div class="g-about">
      <i class="g-rule"></i>
      <span class="g-help">?</span><span>About featured snippets</span><span class="g-bul">•</span>
      <svg class="g-fb" viewBox="0 0 20 24"><path d="M1 2h18v17H6l-4 4z" fill="#5f6368"/><path d="M10 5v7M10 14v2" stroke="#fff" stroke-width="2"/></svg><span>Feedback</span>
    </div>
  </main>

  <div class="taskbar big">
    <div class="weather"><svg class="wicon"><use href="#cloud"/></svg><div><div>65°F</div><div class="wsub">Mostly cloudy</div></div></div>
    <div class="apps">
      <span class="app"><svg><use href="#start"/></svg></span><span class="app"><svg><use href="#tsearch"/></svg></span><span class="app"><svg><use href="#tview"/></svg></span><span class="app"><svg><use href="#chat"/></svg></span><span class="app"><svg><use href="#edge"/></svg></span><span class="app dot"><svg><use href="#folder"/></svg></span><span class="app"><svg><use href="#store"/></svg></span><span class="app"><svg><use href="#office"/></svg></span><span class="app dot"><svg><use href="#ffox"/></svg></span><span class="app dot"><svg><use href="#slack"/></svg></span><span class="app dot"><svg><use href="#term"/></svg></span><span class="app dot"><svg><use href="#code"/></svg></span><span class="app act"><svg><use href="#xl"/></svg></span>
    </div>
    <div class="tray">
      <svg viewBox="0 0 24 24"><path d="M4 17l8-9 8 9" fill="none" stroke="#fff" stroke-width="1.500"/></svg>
      <svg viewBox="0 0 24 24"><path d="M4 12a8 8 0 0 1 13-7M21 1v6h-6M3 21v-6h6" fill="none" stroke="#fff" stroke-width="1.500"/><circle cx="16" cy="17" r="6" fill="#0a78d8"/></svg>
      <svg viewBox="0 0 24 24"><path d="M2 9a14 14 0 0 1 20 0M5 13a10 10 0 0 1 14 0M8 16a6 6 0 0 1 8 0" fill="none" stroke="#fff" stroke-width="2"/><circle cx="12" cy="20" r="2" fill="#fff"/></svg>
      <svg viewBox="0 0 24 24"><path d="M3 9h4l6-5v16l-6-5H3z" fill="none" stroke="#fff" stroke-width="1.500"/><path d="M16 8a6 6 0 0 1 0 8M19 5a10 10 0 0 1 0 14" fill="none" stroke="#fff" stroke-width="1.500"/></svg>
      <svg viewBox="0 0 24 24"><rect x="8" y="6" width="14" height="13" rx="2" fill="none" stroke="#fff" stroke-width="1.500"/><rect x="10" y="8" width="9" height="9" fill="#fff"/><path d="M3 3v5M7 3v5M1 8h8v4l-3 3v5H4v-5L1 12z" fill="#fff" stroke="#fff"/></svg>
    </div>
    <div class="clock"><div>10:06 AM</div><div>10/18/2022</div></div>
  </div>
</section>
</div>
</body>
</html>
```

FILE: styles.css
```css
*{box-sizing:border-box}
html,body{margin:0;padding:0;background:#000}
body{width:3840px;height:1145px;overflow:hidden;font-family:"Open Sans","Noto Sans",sans-serif}
.sprite{position:absolute}
.svgt{font:700 10px "Open Sans",sans-serif;fill:#fff}
.svgt.blue{fill:#4aa3ec}
.svgx{font:700 9px "Open Sans",sans-serif;fill:#fff}
.screens{display:flex;width:3840px;height:1145px}
.monitor{width:1920px;height:1080px;display:flex;flex-direction:column;position:relative;overflow:hidden}
.monitor.right{margin-top:65px}
.desk{flex:1;position:relative;background:#4a675f}
.win{position:absolute}
.ch{width:10px;height:10px;color:inherit;vertical-align:-1px}
.ic12{width:12px;height:14px;flex:none}
.ic14{width:14px;height:16px;flex:none}
.ic16{width:16px;height:16px}

/* back window */
.back{left:1000px;top:209px;width:915px;height:619px;background:#fff;border-radius:8px 8px 4px 4px;display:flex;flex-direction:column;box-shadow:0 0 2px rgba(0,0,0,.3)}
.back-title{height:31px;display:flex;justify-content:flex-end;align-items:center;gap:32px;padding-right:14px;font-size:14px;color:#777}
.back-sub{height:50px;background:#f9f9f9;border-bottom:2px solid #aaa;display:flex;justify-content:flex-end;gap:9px;padding:2px 3px 0 0;font-size:12px;color:#222}
.back-body{flex:1;display:flex}
.back-pane{flex:1}
.back-scroll{width:17px;background:#f0f0f0;position:relative}
.back-scroll i{display:block;width:6px;height:100px;background:#888;margin:108px 0 0 5px}
.back-foot{height:18px;background:#f0f0f0}

/* file explorer */
.fe{left:259px;top:700px;width:782px;height:312px;background:#fff;border-radius:0 0 8px 8px;display:flex;flex-direction:column;box-shadow:0 1px 2px rgba(0,0,0,.4)}
.fe-main{flex:1;display:flex}
.fe-nav{width:158px;border-right:1px solid #f2f2f2;display:flex;flex-direction:column;justify-content:flex-end;gap:12px;padding:0 2px 17px;font-size:11.300px;color:#1a1a1a}
.fe-item{height:28px;display:flex;align-items:center;gap:8px;padding-left:9px;white-space:nowrap}
.fe-item.sel{background:#d9d9d9}
.ar{width:7px;height:10px;flex:none}
.fe-pane{flex:1;display:flex;flex-direction:column;justify-content:flex-end;padding-left:2px}
.fe-hs{height:16px;background:#f0f0f0;padding:7px 0 0 16px}
.fe-hs i{display:block;width:364px;height:2px;background:#888}
.fe-status{height:23px;display:flex;justify-content:space-between;align-items:center;padding:0 7px 0 14px;font-size:11.300px;color:#333}
.fe-views{display:flex;gap:1px}
.fe-views b{width:20px;height:22px;display:flex;align-items:center;justify-content:center}
.fe-views svg{width:12px;height:16px}
.fe-views .on{background:#cce8ff;border:1px solid #99d1ff}

/* excel */
.xl{left:8px;top:0;width:1677px;height:847px;background:#2f2f2f;border:1px solid #7a7a7a;border-radius:8px 8px 8px 8px;display:flex;flex-direction:column;overflow:hidden;color:#fff;font-size:12.5px;box-shadow:0 12px 44px rgba(0,0,0,.45)}
.xl-title{height:49px;flex:none;display:flex;align-items:center;padding-left:14px;color:#999}
.xl-logo{width:20px;height:22px;flex:none}
.dim{color:#a0a0a0;white-space:nowrap}
.t-auto{margin-left:13px}
.toggle{margin-left:7px;width:49px;height:21px;border-radius:11px;background:#5c5c5c;display:flex;align-items:center;gap:5px;padding-left:5px;color:#8f8f8f;font-size:12px}
.toggle i{width:13px;height:13px;border-radius:50%;background:#8a8a8a}
.xl-save{width:17px;height:22px;margin-left:17px;flex:none}
.t-file{margin-left:20px}
.xl-search{width:452px;height:32px;margin-left:268px;background:#333;border:1px solid #222;border-radius:4px;display:flex;align-items:center;gap:8px;padding-left:27px;color:#a0a0a0;flex:none}
.t-user{margin-left:auto;font-size:12.5px}
.avatar{width:24px;height:24px;border-radius:50%;background:#4e8a0c;color:#ddd;font-size:11px;display:flex;align-items:center;justify-content:center;margin-left:10px;flex:none}
.xl-gem{width:18px;height:22px;margin-left:27px;flex:none}
.xl-pen{width:18px;height:26px;margin-left:29px;flex:none}
.xl-ctrl{display:flex;width:144px;justify-content:space-around;margin-left:12px;color:#999;font-size:14px}
.xl-tabs{height:30px;flex:none;display:flex;align-items:center;position:relative;font-size:13px;padding-left:21px}
.tab{color:#f0f0f0;white-space:nowrap}
.t1{width:46px}.t2{width:56px}.t3{width:55px}.t4{width:93px}.t5{width:74px}.t6{width:48px}.t7{width:60px}.t8{width:47px}.t9{width:80px}.t10{width:100px}
.tab.active{font-weight:600;color:#fff}
.tab.active::after{content:"";display:block;width:28px;height:2px;background:#9fd8c0;margin-top:1px}
.tab.active{padding-top:3px}
.btn-comments{margin-left:auto;width:99px;height:25px;border:1px solid #8a8a8a;border-radius:4px;background:#3a3a3a;display:flex;align-items:center;justify-content:center;gap:3px;color:#fff}
.btn-share{margin:0 11px 0 8px;width:81px;height:25px;border-radius:4px;background:#107c41;display:flex;align-items:center;gap:4px;padding-left:7px;color:#fff}
.chs{margin-left:5px}
.ribbon{height:100px;flex:none;margin:0 7px;background:#4c4c4c;border-radius:8px;display:flex;padding-top:4px;position:relative}
.rg{height:94px;position:relative;display:flex;flex-direction:column;flex:none}
.rg::after{content:"";position:absolute;right:0;top:1px;bottom:4px;width:1px;background:#777}
.g1{width:338px}.g2{width:218px}.g3{width:194px}.g4{width:228px}.g5{width:347px}.g6{width:125px}.g7{width:138px}
.rb{height:78px;display:flex;flex:none}
.rl{height:16px;line-height:16px;text-align:center;color:#f2f2f2;font-size:12px;white-space:nowrap}
.big{display:flex;flex-direction:column;align-items:center;color:#f4f4f4;line-height:16px;flex:none;white-space:nowrap}
.bi{width:28px;height:30px;margin:5px 0 3px;flex:none}
.col{display:flex;flex-direction:column;flex:none}
.ri{height:26px;display:flex;align-items:center;gap:3px;white-space:nowrap;color:#f4f4f4}
.ri>svg:first-child{width:16px;height:20px;flex:none}
.ri.off{color:#8e8e8e}
.ri.off>svg{opacity:.45}
.chg{margin-left:10px}
.b-get{width:50px;margin-left:8px}
.c-get1{width:131px;margin-left:4px}
.b-ref{width:50px;margin-left:5px}
.c-q{margin-left:4px}
.gallery{margin:8px 0 0 10px;width:173px;height:60px;background:#dcdcdc;border:1px solid #bbb;border-radius:3px;display:flex;color:#222;font-size:12px;position:relative}
.gal-i{display:flex;flex-direction:column;align-items:center;width:79px;padding-top:2px}
.gi{width:28px;height:35px;margin:0 0 2px 0}
.gi2{width:32px}
.gal-s{width:13px;margin-left:auto;display:flex;flex-direction:column;background:#4c4c4c;color:#eee;font-size:9px}
.gal-s b{flex:1;display:flex;align-items:center;justify-content:center;border:1px solid #888;font-weight:400}
.azs{width:24px;margin:10px 0 0 11px;display:flex;flex-direction:column;gap:4px;flex:none}
.azs svg{width:20px;height:32px}
.b-sort{width:40px;position:relative}
.b-filter{width:40px;margin-left:16px}
.b-sort::after{content:"";position:absolute;right:-9px;top:2px;height:64px;width:1px;background:#777}
.c-f{margin-left:6px}
.b-t2c{width:56px;margin-left:6px}
.c-d1{width:136px;margin-left:5px}
.b-wi{width:60px;margin-left:7px}
.b-fc{width:50px;margin-left:1px}
.c-o{width:106px;margin-left:13px}
.launch{width:10px;height:10px;position:absolute;right:8px;top:84px}
.collapse{position:absolute;right:10px;top:81px;color:#eee;width:12px;height:12px}
.fbar{height:41px;flex:none;display:flex;align-items:center;padding:0 7px;color:#8a8a8a}
.fb-name{width:101px;height:26px;background:#4f4f4f;border:1px solid #777;border-radius:3px;display:flex;align-items:center;justify-content:flex-end;padding-right:9px;color:#ddd;flex:none}
.fb-dots{width:21px;text-align:center;color:#aaa;font-size:14px}
.fb-fx{width:74px;height:26px;background:#4f4f4f;border:1px solid #777;border-radius:3px;display:flex;align-items:center;gap:7px;padding-left:5px;flex:none}
.fb-fx em{color:#ddd;font:italic 700 15px "Liberation Serif",serif}
.fb-in{flex:1;height:26px;margin-left:4px;background:#4f4f4f;border:1px solid #777;border-radius:3px;display:flex;align-items:center;justify-content:flex-end;padding-right:4px;color:#ccc}
.sheetwrap{height:577px;flex:none;display:flex;position:relative;background:#333}
.sheet{flex:1;position:relative;overflow:hidden;background:#fff;color:#000;font-family:Lato,"Open Sans",sans-serif;font-size:14.500px}
.hd{height:20px;display:flex;background:#2e2e2e;color:#eee;border-bottom:1px solid #a0a0a0;font-family:"Open Sans",sans-serif;font-size:13px;line-height:19px;text-align:center}
.hd>div{flex:none;border-right:1px solid #9a9a9a}
.corner{width:25px;position:relative}
.corner::after{content:"";position:absolute;right:3px;bottom:2px;border-style:solid;border-width:0 0 14px 14px;border-color:transparent transparent #e8e8e8 transparent}
.ch-a{width:126px}.ch-b{width:126px}.ch-c{width:84px}.ch-n{width:64px}.ch-x{width:20px;border-right:0!important}
.ch-n.cur{background:#6a6a6a;box-shadow:inset 0 -2px 0 #217346}
.rw{height:19px;display:grid;grid-template-columns:25px 126px 126px 84px 1fr;border-bottom:1px solid #dcdcdc;line-height:18px;white-space:nowrap}
.rh{background:#2e2e2e;color:#eee;text-align:center;font-family:"Open Sans",sans-serif;font-size:13px;margin-bottom:-1px;border-bottom:1px solid #a0a0a0;height:19px}
.rh.cur{background:#6a6a6a;box-shadow:inset -2px 0 0 #217346}
.short{height:15px;line-height:13px}
.short .rh{height:15px;box-shadow:inset 0 -2px 0 #2e2e2e,inset 0 -3px 0 #a0a0a0;line-height:13px}
.ca,.cb,.cc{border-right:1px solid #dcdcdc;padding:0 2px;height:18px}
.cb,.cc{text-align:right;letter-spacing:-.9px;padding-right:3px}
.cr{background:repeating-linear-gradient(90deg,transparent 0 63px,#dcdcdc 63px 64px)}
.hdrow{font-weight:700;border-image:linear-gradient(90deg,#000 0 361px,#dcdcdc 361px) 1}
.hdrow .hl{text-align:left;letter-spacing:-.2px}
.hdrow .rh{font-weight:400}
.gr{background:#0f0;box-shadow:0 1px 0 #0f0;border-right-color:#0f0}
.rd{background:#f00;box-shadow:0 1px 0 #f00;border-right-color:#f00}
.selcell{position:absolute;left:488px;top:452px;width:65px;height:20px;border:2px solid #217346}
.runbtn{position:absolute;left:620px;top:548px;width:103px;height:29px;background:#f0f0f0;border-right:1px solid #555;font:12.500px "Open Sans",sans-serif;display:flex;align-items:center;justify-content:center;color:#222}
.vscroll{width:19px;flex:none;background:#333;display:flex;flex-direction:column;align-items:center;position:relative;border-right:6px solid #6a6a6a}
.vscroll i{width:10px;height:205px;margin-top:5px;background:#bdbdbd;border-radius:5px}
.vscroll .up{margin-top:3px;border-style:solid;border-width:0 5px 8px;border-color:transparent transparent #bbb}
.vscroll .dn{margin-top:auto;margin-bottom:3px;border-style:solid;border-width:8px 5px 0;border-color:#bbb transparent transparent}
.sheettabs{height:28px;flex:none;background:#6a6a6a;display:flex;align-items:center;position:relative;color:#f2f2f2;font-size:13px}
.nav{position:absolute;top:2px;color:#bbb;font-size:16px;left:28px}
.n2{left:56px}
.st{position:absolute;top:0;height:25px;display:flex;align-items:center;justify-content:center;white-space:nowrap;border-right:1px solid #999}
.s1{left:99px;width:52px;border-left:1px solid #999;height:24px}
.s2{left:151px;width:52px;height:24px}
.s3{left:203px;width:99px;height:24px;border-right:0}
.st.cur{left:302px;width:138px;background:#fff;color:#217346;font-weight:700;font-size:13px;border:0;border-bottom:3px solid #217346}
.addsheet{position:absolute;left:472px;top:5px;width:18px;height:18px}
.more{position:absolute;left:992px;top:0;width:27px;height:28px;background:#2e2e2e;text-align:center;line-height:26px;font-size:16px}
.hscroll{position:absolute;left:1019px;right:19px;top:5px;height:17px;background:#2e2e2e;display:flex;align-items:center;padding:0 6px}
.hscroll i{flex:1;height:9px;background:#c0c0c0;border-radius:5px;margin:0 27px 0 6px}
.la{border-style:solid;border-width:5px 6px 5px 0;border-color:transparent #bbb transparent transparent}
.ra{border-style:solid;border-width:5px 0 5px 6px;border-color:transparent transparent transparent #ccc}
.status{height:21px;flex:none;background:#424242;display:flex;align-items:center;padding-left:6px;font-size:11.500px;color:#f2f2f2;white-space:nowrap}
.s-macro{width:14px;height:18px;margin-left:20px}
.s-acc{width:15px;height:19px;margin:0 2px 0 17px}
.s-disp{width:18px;height:18px;margin-left:auto}
.s-dt{margin-right:18px}
.vw{width:40px;height:21px;display:flex;align-items:center;justify-content:center}
.vw svg{width:14px;height:19px}
.vw.on{background:#555}
.zoom{display:flex;align-items:center;gap:4px;margin-left:6px}
.slider{width:100px;height:1px;background:#ddd;position:relative}
.slider i{position:absolute;left:48px;top:-5px;width:4px;height:11px;background:#ccc}
.pct{margin:0 18px 0 10px}

/* dialog */
.dialog{left:819px;top:468px;width:303px;height:148px;background:#fff;border-radius:8px;display:flex;flex-direction:column;box-shadow:0 8px 30px rgba(0,0,0,.4),0 0 1px rgba(0,0,0,.5);font-family:"Open Sans",sans-serif;color:#222;overflow:hidden}
.dlg-t{height:30px;display:flex;align-items:center;justify-content:space-between;padding:0 9px 0 8px;font-size:11px;color:#111}
.dlg-b{height:69px;padding:26px 0 0 11px;font-size:10.750px;white-space:nowrap;color:#333}
.dlg-f{flex:1;background:#f0f0f0;display:flex;justify-content:flex-end;padding:11px 17px 0 0}
.okbtn{width:73px;height:25px;background:#e1ecf6;border:2px solid #5b9bd5;border-radius:3px;font-size:12px;display:flex;align-items:center;justify-content:center}

/* taskbar */
.taskbar{flex:none;background:#1a2b28;color:#d8dedc;display:grid;grid-template-columns:1fr auto 1fr;align-items:center;position:relative}
.taskbar.small{height:48px;font-size:12px;padding:0 18px 0 20px}
.taskbar.big{height:72px;font-size:18px;padding:0 27px 0 30px}
.weather{display:flex;align-items:center}
.wsub{color:#c2cbc8}
.small .weather{gap:7px;line-height:16px}
.big .weather{gap:11px;line-height:25px}
.small .wicon{width:24px;height:20px}
.big .wicon{width:36px;height:30px}
.apps{display:flex}
.app{display:flex;align-items:center;justify-content:center;position:relative}
.small .app{width:44px;height:48px}
.big .app{width:66px;height:72px}
.small .app svg{width:24px;height:24px}
.big .app svg{width:36px;height:36px}
.app.dot::after{content:"";position:absolute;left:50%;background:#9aa5a2;border-radius:2px}
.small .app.dot::after{width:5px;height:4px;margin-left:-2.500px;bottom:5px}
.big .app.dot::after{width:8px;height:7px;margin-left:-4px;bottom:6px}
.app.act{background:#2a3b38;border-radius:5px}
.small .app.act{height:40px;width:36px;margin:0 4px}
.big .app.act{height:60px;width:58px;margin:0 4px}
.app.act::after{content:"";position:absolute;left:50%;background:#0a8cf0;border-radius:2px}
.small .app.act::after{width:16px;height:3px;margin-left:-8px;bottom:1px}
.big .app.act::after{width:23px;height:4px;margin-left:-11.500px;bottom:2px}
.clock{text-align:right;justify-self:end}
.small .clock{line-height:16px}
.big .clock{line-height:24px;color:#fff}
.tray{display:flex;position:absolute;right:136px;top:22px;gap:9px}
.tray svg{width:28px;height:28px}

/* firefox */
.chrome{height:169px;flex:none;position:relative;background:linear-gradient(#ff80a9,#ffa99b 66px);border-bottom:1px solid #b58a80;overflow:hidden}
.art{position:absolute;top:0;width:240px;height:168px}
.artl{left:0}
.artr{right:0}
.ff-tabs{height:66px;position:relative;display:flex;align-items:center;padding-left:18px}
.ftab{height:53px;display:flex;align-items:center;font-size:17px;color:#33215e;white-space:nowrap;flex:none}
.ftab:first-child{width:324px}
.r-logo{font:24px "Liberation Serif",serif;color:#d0103a;width:30px}
.ft-t{width:262px;overflow:hidden;white-space:nowrap}
.ftab:first-child .ft-t{width:252px}
.ft-x{font-size:17px;color:#3a2a60}
.ftab.on{width:329px;background:#ffe4ea;border:1px solid #b08cf0;border-bottom:2px solid #a078f0;border-radius:4px;padding-left:13px;color:#5b5560}
.ftab.on .ft-t{-webkit-mask-image:linear-gradient(90deg,#000 85%,transparent);mask-image:linear-gradient(90deg,#000 85%,transparent);width:246px}
.g-fav{width:24px;height:24px;border-radius:50%;background:#fff;color:#4285f4;font:700 19px "Liberation Sans",sans-serif;display:flex;align-items:center;justify-content:center;margin-right:7px;flex:none}
.ft-plus{font-size:36px;font-weight:300;color:#5a35e0;margin-left:21px;line-height:1}
.ff-ctl{margin-left:auto;display:flex;color:#7b4a80;font-size:20px}
.ff-ctl span{width:69px;text-align:center}
.ff-bars{position:relative;height:102px;background:rgba(255,243,232,.82);display:flex;flex-direction:column}
.ff-nav{height:58px;display:flex;align-items:center;padding-left:25px;flex:none}
.nv{width:23px;height:23px;flex:none}
.n-fwd{margin-left:31px}
.n-rel{margin-left:31px}
.urlbar{margin-left:172px;width:1320px;height:48px;background:#fffcf8;border-radius:6px;display:flex;align-items:center;padding-left:12px;gap:16px;flex:none}
.uic{width:24px;height:26px;flex:none}
.urlt{font-size:18.500px;color:#8b8090;white-space:nowrap;margin-left:-1px}
.urlt b{font-weight:400;color:#221640}
.ustar{width:27px;height:27px;margin-left:auto;margin-right:10px;flex:none}
.n-pock{margin-left:172px}
.n-menu{margin-left:40px}
.ff-book{height:44px;display:flex;align-items:center;padding-left:19px;font-size:16.500px;color:#261650;flex:none}
.bm{display:flex;align-items:center;gap:8px;white-space:nowrap;flex:none}
.bm svg{width:22px;height:24px;flex:none}
.b1{width:169px}.b2{width:240px}.b3{width:240px}.b4{width:240px}.b5{width:187px}.b6{width:160px}.b7{width:125px}

/* google */
.gpage{flex:1;background:#fff;font-family:"Liberation Sans",sans-serif;color:#202124;min-height:0;overflow:hidden;position:relative}
.g-head{height:134px;display:flex;align-items:flex-start;padding:39px 0 0 155px}
.g-logo{width:205px;font:500 45px Roboto,sans-serif;letter-spacing:-1.2px;line-height:52px;margin-top:9px}
.lb{color:#4285f4}.lr{color:#ea4335}.ly{color:#fbbc05}.lg{color:#34a853}
.g-box{width:809px;height:68px;border-radius:34px;background:#fff;box-shadow:0 2px 9px rgba(32,33,36,.3);display:flex;align-items:center;padding-left:31px;font-size:24.500px}
.g-q{width:583px;color:#202124}
.g-x{width:30px;height:30px;flex:none}
.g-div{width:1px;height:40px;background:#dfe1e5;margin:0 21px}
.g-lens{width:30px;height:30px;flex:none}
.g-mag{width:30px;height:30px;margin-left:29px;flex:none}
.g-right{margin-left:525px;margin-top:12px;display:flex;align-items:center}
.g-gear{width:32px;height:32px}
.g-apps{width:28px;height:28px;margin-left:39px}
.g-av{width:48px;height:48px;border-radius:50%;background:#00897b;color:#fff;font-size:27px;display:flex;align-items:center;justify-content:center;margin-left:34px}
.g-tabs{height:65px;display:flex;align-items:center;padding:0 0 0 163px;font-size:21px;color:#5f6368;border-bottom:2px solid #e8eaed}
.gt{display:flex;align-items:center;gap:8px;margin-right:37px;white-space:nowrap}
.gt svg{width:22px;height:24px;flex:none}
.g-all{color:#1a73e8;position:relative}
.g-all::after{content:"";position:absolute;left:-2px;right:0;top:41px;height:4px;background:#1a73e8}
.g-more{gap:9px;margin-left:-1px}
.g-more b{font-weight:700;color:#5f6368;font-size:22px}
.g-tools{margin-left:189px;margin-right:0}
.g-chips{display:flex;gap:14px;padding-left:161px;margin-top:24px}
.chip{height:65px;border-radius:33px;background:#f1f3f4;display:flex;align-items:center;padding:0 24px 0 22px;gap:12px;font-size:21px;color:#202124;white-space:nowrap}
.chip svg{width:20px;height:24px;color:#70757a}
.g-para{margin:37px 0 0 161px;font-size:24px;line-height:36px;color:#202124;white-space:nowrap}
.g-list{list-style:none;margin:13px 0 0 161px;padding:0;font-size:21px;color:#4d5156;white-space:nowrap}
.g-list li{height:50.500px;line-height:50px}
.g-list b{font-size:24px;color:#202124}
.g-url{margin:16px 0 0 162px;font-size:21px;color:#4d5156;display:flex;align-items:center;gap:30px;height:30px;white-space:nowrap}
.g-url em{font-style:normal;color:#202124}
.g-url b{font-size:24px;color:#5f6368}
.g-title{display:block;margin:8px 0 0 162px;font-size:30px;color:#1a0dab;line-height:36px;white-space:nowrap}
.g-about{position:absolute;left:161px;top:798px;height:30px;display:flex;align-items:center;font-size:19px;color:#70757a;white-space:nowrap}
.g-rule{width:578px;height:3px;background:#dadce0;margin-right:23px}
.g-help{width:20px;height:20px;border-radius:50%;background:#70757a;color:#fff;font-size:15px;font-weight:700;text-align:center;line-height:20px;margin-right:14px}
.g-bul{margin:0 20px}
.g-fb{width:20px;height:24px;margin-right:14px}
```
